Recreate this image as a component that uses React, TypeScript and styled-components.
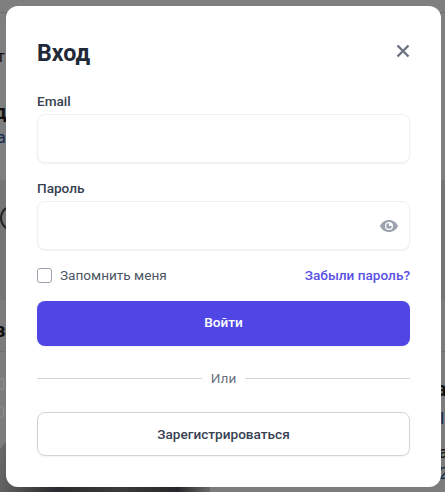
import * as React from 'react';
import styled, { createGlobalStyle } from 'styled-components';

const GlobalStyle = createGlobalStyle`
  html, body {
    margin: 0;
    padding: 0;
    height: 100%;
    overflow: hidden;
  }
  body {
    font-family: Roboto, "Liberation Sans", sans-serif;
  }
`

// page behind the dialog, only slivers of it show at the edges
const Backdrop = styled.div`
  position: relative;
  width: 445px;
  height: 492px;
  overflow: hidden;
  background: linear-gradient(#7f7f7f 0, #7f7f7f 180px, #757575 180px, #757575 300px, #7c7c7c 300px);
`

const PageLine = styled.div<{ $top: number }>`
  position: absolute;
  left: 0;
  right: 0;
  top: ${p => p.$top}px;
  height: 1px;
  background: #6f6f6f;
`

const PageText = styled.span<{ $x: number, $y: number, $bold?: boolean, $blue?: boolean }>`
  position: absolute;
  left: ${p => p.$x}px;
  top: ${p => p.$y}px;
  font-size: ${p => p.$bold ? 20 : 16}px;
  line-height: 20px;
  font-weight: ${p => p.$bold ? 700 : 400};
  color: ${p => p.$blue ? '#13294b' : '#111'};
  white-space: nowrap;
`

const PageRing = styled.div`
  position: absolute;
  left: 0;
  top: 205px;
  width: 22px;
  height: 22px;
  border: 2px solid #222;
  border-radius: 50%;
`

const PageBox = styled.div<{ $y: number }>`
  position: absolute;
  left: -8px;
  top: ${p => p.$y}px;
  width: 10px;
  height: 10px;
  border: 1px solid #8e8e8e;
  border-radius: 2px;
`

const PagePhoto = styled.div`
  position: absolute;
  left: 0;
  bottom: 0;
  width: 210px;
  height: 62px;
  background: linear-gradient(100deg, #6d6d6d 0, #2b2b2f 30%, #3c3a3a 60%, #27272b 85%, #6a6a6a 100%);
  clip-path: polygon(0 30%, 8% 0, 100% 0, 100% 100%, 0 100%);
`

const Dialog = styled.div`
  position: absolute;
  left: 6px;
  top: 6px;
  width: 435px;
  height: 481px;
  box-sizing: border-box;
  padding: 28px 31px 31px;
  background: #fff;
  border-radius: 12px;
  display: flex;
  flex-direction: column;
`

const Header = styled.div`
  display: flex;
  align-items: center;
  justify-content: space-between;
  height: 38px;
  margin-bottom: 19px;
`

const Title = styled.h2`
  margin: 0;
  font-size: 23.2px;
  line-height: 38px;
  font-weight: 700;
  color: #1f2937;
`

const CloseButton = styled.button`
  border: 0;
  padding: 0;
  background: none;
  width: 16px;
  height: 16px;
  margin: 0 -1px 4px 0;
  color: #6b7280;
  display: flex;
`

const Field = styled.div`
  display: flex;
  flex-direction: column;
  gap: 3px;
  margin-bottom: 15px;
`

const Label = styled.label`
  font-size: 13.6px;
  line-height: 20px;
  font-weight: 500;
  color: #374151;
`

const InputWrap = styled.div`
  position: relative;
`

const Input = styled.input`
  display: block;
  width: 100%;
  height: 49px;
  box-sizing: border-box;
  border: 1px solid #f0f1f4;
  border-radius: 8px;
  background: #fff;
  box-shadow: 0 1px 2px rgba(0, 0, 0, 0.06);
  outline: none;
`

const EyeButton = styled.span`
  position: absolute;
  right: 11px;
  top: 15px;
  width: 20px;
  height: 20px;
  color: #9ca3af;
  display: flex;
`

const OptionsRow = styled.div`
  display: flex;
  align-items: center;
  justify-content: space-between;
  height: 20px;
  margin-bottom: 16px;
`

const Remember = styled.label`
  display: flex;
  align-items: center;
  gap: 8px;
  font-size: 13.6px;
  line-height: 20px;
  color: #4b5563;
`

const Checkbox = styled.span`
  width: 15px;
  height: 15px;
  box-sizing: border-box;
  border: 1px solid #9ca3af;
  border-radius: 3px;
  background: #fff;
`

const ForgotLink = styled.a`
  font-size: 13.6px;
  line-height: 20px;
  font-weight: 500;
  color: #5a51e6;
  text-decoration: none;
`

const PrimaryButton = styled.button`
  height: 45px;
  border: 0;
  border-radius: 8px;
  padding: 0 0 3px;
  background: #4f46e5;
  color: #fff;
  font: 500 13.6px/20px Roboto, sans-serif;
  box-shadow: 0 1px 2px rgba(0, 0, 0, 0.05);
`

const Divider = styled.div`
  display: flex;
  align-items: center;
  gap: 9px;
  height: 20px;
  margin: 22px 0 24px;
  font-size: 13.6px;
  line-height: 20px;
  color: #6b7280;

  &::before, &::after {
    content: '';
    flex: 1;
    height: 1px;
    background: #d1d5db;
  }
`

const SecondaryButton = styled.button`
  height: 44px;
  border: 1px solid #d1d5db;
  border-radius: 8px;
  padding: 0 0 1px;
  background: #fff;
  color: #374151;
  font: 500 13.6px/20px Roboto, sans-serif;
  box-shadow: 0 1px 2px rgba(0, 0, 0, 0.05);
`

function CloseIcon() {
  return (
    <svg width='16' height='16' viewBox='0 0 16 16' fill='none' stroke='currentColor' strokeWidth='2.4'>
      <path d='M2.5 2.5l11 11M13.5 2.5l-11 11' />
    </svg>
  )
}

function EyeIcon() {
  return (
    <svg width='20' height='20' viewBox='0 0 20 20' fill='currentColor'>
      <path fillRule='evenodd' d='M10 4C5.8 4 2.3 6.6 1 10c1.3 3.4 4.8 6 9 6s7.7-2.6 9-6c-1.3-3.4-4.8-6-9-6zm0 10a4 4 0 1 1 0-8 4 4 0 0 1 0 8z' />
      <path d='M10 7.2a2.8 2.8 0 1 0 2.8 2.8h-2.8z' />
    </svg>
  )
}

export default function App() {
  return <>
    <GlobalStyle />
    <Backdrop>
      <PageLine $top={12} />
      <PageLine $top={351} />
      <PageText $x={-3} $y={47}>т</PageText>
      <PageText $x={-6} $y={102} $bold>д</PageText>
      <PageText $x={-3} $y={128} $blue>ан</PageText>
      <PageRing />
      <PageText $x={-5} $y={320} $bold>за</PageText>
      <PageBox $y={378} />
      <PageBox $y={406} />
      <PagePhoto />
      <PageText $x={436} $y={379} $bold>а</PageText>
      <PageText $x={440} $y={409} $blue>I</PageText>
      <PageText $x={439} $y={443}>а</PageText>
      <PageText $x={439} $y={464} $blue>2</PageText>
      <Dialog>
        <Header>
          <Title>Вход</Title>
          <CloseButton><CloseIcon /></CloseButton>
        </Header>
        <Field>
          <Label>Email</Label>
          <InputWrap><Input type='email' /></InputWrap>
        </Field>
        <Field>
          <Label>Пароль</Label>
          <InputWrap>
            <Input type='password' />
            <EyeButton><EyeIcon /></EyeButton>
          </InputWrap>
        </Field>
        <OptionsRow>
          <Remember><Checkbox />Запомнить меня</Remember>
          <ForgotLink href='#'>Забыли пароль?</ForgotLink>
        </OptionsRow>
        <PrimaryButton>Войти</PrimaryButton>
        <Divider>Или</Divider>
        <SecondaryButton>Зарегистрироваться</SecondaryButton>
      </Dialog>
    </Backdrop>
  </>
}
